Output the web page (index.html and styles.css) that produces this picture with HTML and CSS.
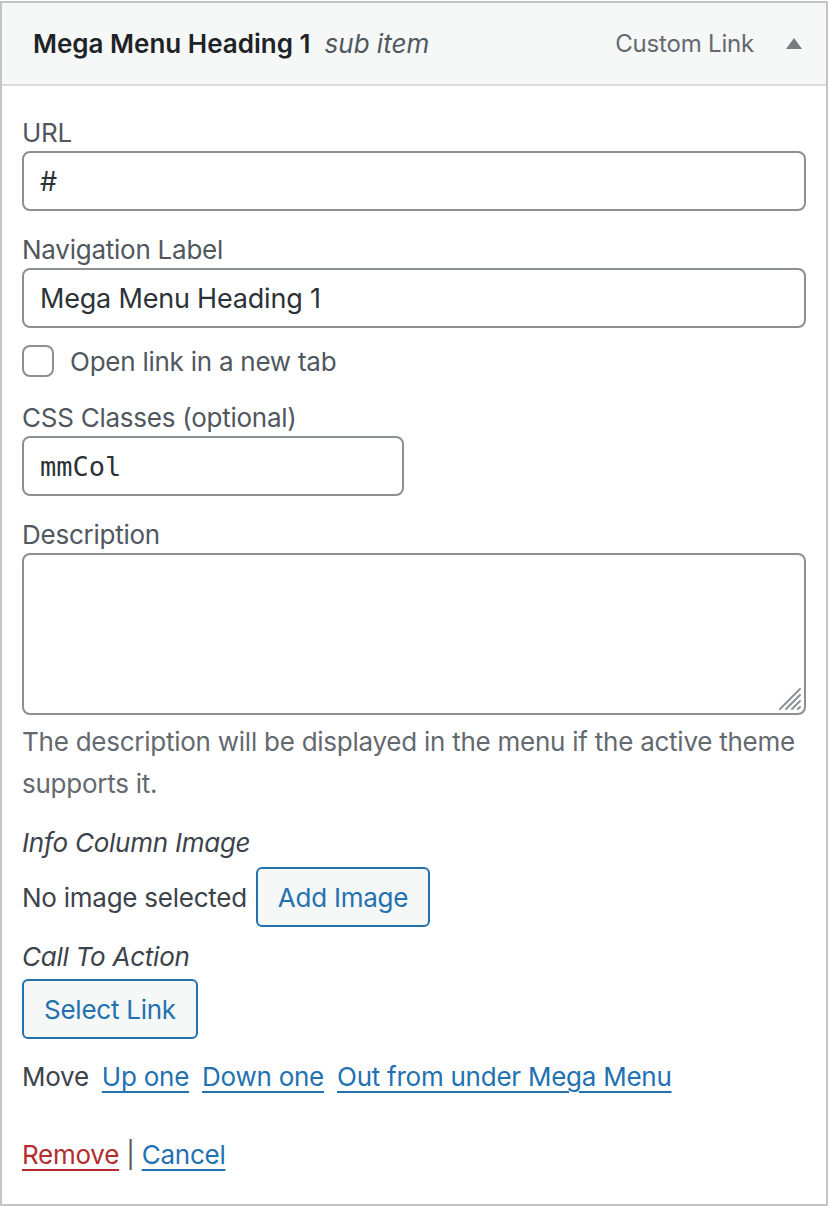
FILE: index.html
```html
<!DOCTYPE html>
<html lang="en">
<head>
<meta charset="utf-8">
<title>Menu item</title>
<link rel="stylesheet" href="styles.css">
</head>
<body>
<div class="menu-item">
  <div class="item-bar">
    <span class="item-title">
      <span class="menu-item-title">Mega Menu Heading 1</span>
      <span class="is-submenu">sub item</span>
    </span>
    <span class="item-controls">
      <span class="item-type">Custom Link</span>
      <span class="toggle"><svg width="16" height="11" viewBox="0 0 16 11"><path d="M8 0 L16 11 L0 11 Z" fill="#787c82"/></svg></span>
    </span>
  </div>
  <div class="settings">
    <div class="field">
      <label class="lbl">URL</label>
      <input class="text wide" type="text" value="#">
    </div>
    <div class="field">
      <label class="lbl">Navigation Label</label>
      <input class="text wide" type="text" value="Mega Menu Heading 1">
    </div>
    <div class="check-row">
      <input class="check" type="checkbox">
      <span class="check-label">Open link in a new tab</span>
    </div>
    <div class="field">
      <label class="lbl">CSS Classes (optional)</label>
      <input class="text narrow mono" type="text" value="mmCol">
    </div>
    <div class="field">
      <label class="lbl">Description</label>
      <div class="ta-wrap">
        <textarea class="ta"></textarea>
        <svg class="grip" width="26" height="26" viewBox="0 0 26 26"><g stroke="#8c8f94" stroke-width="2" stroke-linecap="round"><line x1="3" y1="23" x2="23" y2="3"/><line x1="9" y1="23" x2="23" y2="9"/><line x1="15" y1="23" x2="23" y2="15"/><line x1="21" y1="23" x2="23" y2="21"/></g></svg>
      </div>
      <p class="desc">The description will be displayed in the menu if the active theme supports it.</p>
    </div>
    <div class="group">
      <div class="ital">Info Column Image</div>
      <div class="img-row"><span class="dark">No image selected</span><button class="btn">Add Image</button></div>
    </div>
    <div class="group cta">
      <div class="ital">Call To Action</div>
      <div class="btn-row"><button class="btn">Select Link</button></div>
    </div>
    <div class="move-row">
      <span class="dark">Move</span>
      <a href="#" class="link">Up one</a>
      <a href="#" class="link">Down one</a>
      <a href="#" class="link">Out from under Mega Menu</a>
    </div>
    <div class="actions">
      <a href="#" class="remove">Remove</a><span class="sep"> | </span><a href="#" class="link">Cancel</a>
    </div>
  </div>
</div>
</body>
</html>
```
FILE: styles.css
```css
html, body {
  margin: 0;
  padding: 0;
  background: #ffffff;
}
body {
  font-family: Inter, "Noto Sans", sans-serif;
  color: #3c434a;
  letter-spacing: -0.25px;
}
.menu-item {
  width: 828px;
  box-sizing: border-box;
  border: 2px solid #c3c4c7;
  margin-top: 1px;
  height: 1205px;
}
.item-bar {
  display: flex;
  align-items: center;
  justify-content: space-between;
  height: 81px;
  background: #f6f7f7;
  border-bottom: 2px solid #dcdcde;
  padding: 0 24px 0 31px;
}
.item-title {
  display: flex;
  align-items: baseline;
  gap: 14px;
  font-size: 26px;
  letter-spacing: 0;
}
.menu-item-title {
  font-weight: 600;
  color: #1d2327;
}
.is-submenu {
  font-style: italic;
  color: #50575e;
}
.item-controls {
  display: flex;
  align-items: center;
  gap: 32px;
}
.item-type {
  font-size: 24px;
  letter-spacing: -0.2px;
  color: #646970;
}
.toggle {
  display: flex;
  align-items: center;
  height: 20px;
}
.settings {
  padding: 29px 20px 0 20px;
}
.field {
  display: flex;
  flex-direction: column;
  margin-bottom: 21px;
}
.lbl {
  font-size: 26px;
  line-height: 36px;
  color: #50575e;
}
.text {
  box-sizing: border-box;
  height: 60px;
  border: 2px solid #8c8f94;
  border-radius: 8px;
  padding: 0 16px;
  font-family: Inter, "Noto Sans", sans-serif;
  font-size: 27px;
  letter-spacing: -0.2px;
  color: #2c3338;
  background: #fff;
  outline: none;
  margin: 0;
}
.wide { width: 784px; }
.narrow { width: 382px; }
.mono {
  font-family: "DejaVu Sans Mono", "Liberation Mono", monospace;
  font-size: 27px;
  letter-spacing: 0;
}
.check-row {
  display: flex;
  align-items: center;
  gap: 16px;
  margin: -4px 0 23px 0;
}
.check {
  appearance: none;
  -webkit-appearance: none;
  width: 32px;
  height: 32px;
  margin: 0;
  border: 2px solid #8c8f94;
  border-radius: 8px;
  background: #fff;
}
.check-label {
  font-size: 26px;
  color: #50575e;
}
.ta-wrap {
  position: relative;
  width: 784px;
  height: 162px;
}
.ta {
  box-sizing: border-box;
  width: 784px;
  height: 162px;
  border: 2px solid #8c8f94;
  border-radius: 8px;
  resize: none;
  margin: 0;
  display: block;
  outline: none;
}
.grip {
  position: absolute;
  right: 3px;
  bottom: 3px;
}
.desc {
  margin: 6px 0 0 0;
  font-size: 26px;
  line-height: 42px;
  color: #646970;
}
.group {
  margin-top: -1px;
}
.ital {
  font-style: italic;
  font-size: 26px;
  line-height: 36px;
  color: #3c434a;
}
.img-row {
  display: flex;
  align-items: center;
  gap: 9px;
  margin-top: 6px;
  font-size: 26px;
}
.dark {
  color: #3c434a;
  font-size: 26px;
}
.btn {
  box-sizing: border-box;
  height: 60px;
  padding: 0 20px;
  border: 2px solid #2271b1;
  border-radius: 6px;
  background: #f6f7f7;
  color: #2271b1;
  font-family: Inter, "Noto Sans", sans-serif;
  font-size: 26px;
  letter-spacing: -0.25px;
}
.cta {
  margin-top: 12px;
}
.btn-row {
  margin-top: 4px;
  display: flex;
}
.move-row {
  display: flex;
  align-items: baseline;
  gap: 13px;
  margin-top: 20px;
  font-size: 26px;
  line-height: 36px;
}
.link {
  color: #2271b1;
  text-decoration: underline;
  text-decoration-thickness: 2px;
  text-underline-offset: 5px;
  font-size: 26px;
}
.actions {
  margin-top: 42px;
  font-size: 26px;
  line-height: 36px;
}
.remove {
  color: #b32d2e;
  text-decoration: underline;
  text-decoration-thickness: 2px;
  text-underline-offset: 5px;
}
.sep {
  color: #50575e;
}
```
